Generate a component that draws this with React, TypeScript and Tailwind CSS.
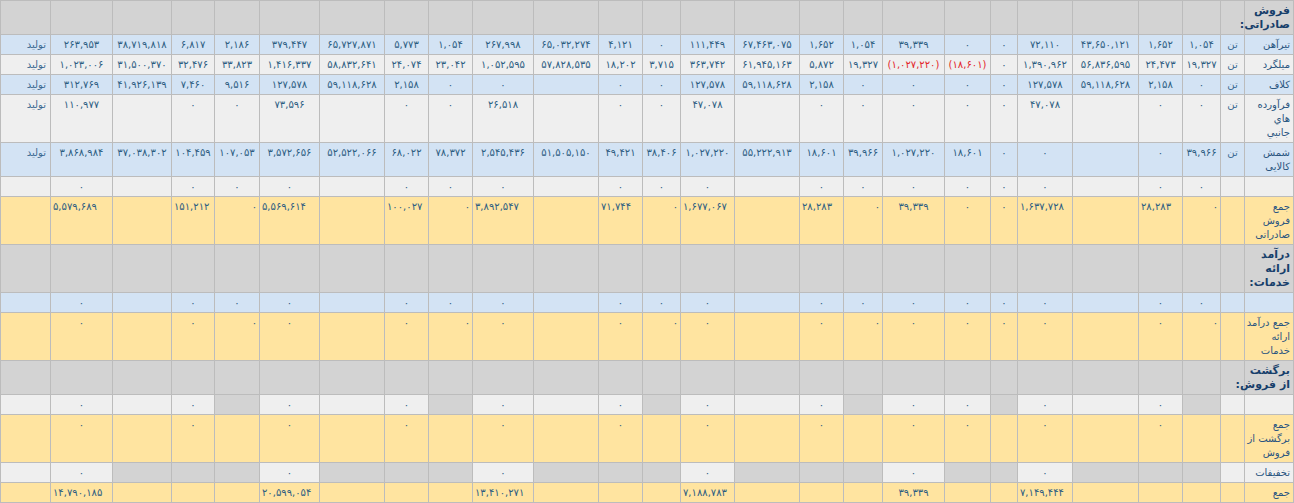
import React from "react";

const fa = (s: string) => s.replace(/[0-9]/g, (d) => "۰۱۲۳۴۵۶۷۸۹"[+d]);

type Kind = "head" | "blue" | "light" | "yellow";

const BG: Record<Kind, string> = {
  head: "bg-[#d3d3d3]",
  blue: "bg-[#d3e3f4]",
  light: "bg-[#efefef]",
  yellow: "bg-[#ffe4a0]",
};

// column widths, right to left
const WIDTHS = [49, 24, 38, 44, 66, 55, 27, 46, 62, 39, 44, 65, 54, 38, 44, 65, 61, 44, 44, 65, 60, 45, 43, 59, 62, 50];

const E = Array(25).fill("") as string[];

// cells are given right to left, unit column first. "<" left, ">" right, "#" grey cell
const ROWS: { kind: Kind; label: string; cells: string[] }[] = [
  { kind: "head", label: "فروش\nصادراتی:", cells: E },
  {
    kind: "blue",
    label: "تیرآهن",
    cells: ["تن", "1,054", "1,652", "43,650,121", "72,110", "0", "0", "39,339", "1,054", "1,652", "67,463,075", "111,449", "0", "4,121", "65,032,274", "267,998", "1,054", "5,773", "65,727,871", "379,447", "2,186", "6,817", "38,719,818", "263,953", "تولید"],
  },
  {
    kind: "light",
    label: "میلگرد",
    cells: ["تن", "19,327", "24,473", "56,836,595", "1,390,962", "0", "(18,601)", "(1,027,220)", "19,327", "5,872", "61,945,163", "363,742", "3,715", "18,202", "57,828,535", "1,052,595", "23,042", "24,074", "58,832,641", "1,416,337", "33,823", "32,476", "31,500,370", "1,023,006", "تولید"],
  },
  {
    kind: "blue",
    label: "کلاف",
    cells: ["تن", "0", "2,158", "59,118,628", "127,578", "0", "0", "0", "0", "2,158", "59,118,628", "127,578", "0", "0", "", "0", "0", "2,158", "59,118,628", "127,578", "9,516", "7,460", "41,926,139", "312,769", "تولید"],
  },
  {
    kind: "light",
    label: "فرآورده\nهاي\nجانبي",
    cells: ["تن", "0", "0", "", "47,078", "0", "0", "0", "0", "0", "", "47,078", "0", "0", "", "26,518", "0", "0", "", "73,596", "0", "0", "", "110,977", "تولید"],
  },
  {
    kind: "blue",
    label: "شمش\nکالایی",
    cells: ["تن", "39,966", "0", "", "0", "0", "18,601", "1,027,220", "39,966", "18,601", "55,222,913", "1,027,220", "38,406", "49,421", "51,505,150", "2,545,436", "78,372", "68,022", "52,522,066", "3,572,656", "107,053", "104,459", "37,038,302", "3,868,984", "تولید"],
  },
  {
    kind: "light",
    label: "",
    cells: ["", "0", "0", "", "0", "0", "0", "0", "0", "0", "", "0", "0", "0", "", "0", "0", "0", "", "0", "0", "0", "", "0", ""],
  },
  {
    kind: "yellow",
    label: "جمع\nفروش\nصادراتی",
    cells: ["", ">0", "<28,283", "", "<1,637,728", "0", "0", "39,339", ">0", "<28,283", "", "<1,677,067", ">0", "<71,744", "", "<3,892,547", ">0", "<100,027", "", "<5,569,614", ">0", "<151,212", "", "<5,579,689", ""],
  },
  { kind: "head", label: "درآمد\nارائه\nخدمات:", cells: E },
  {
    kind: "blue",
    label: "",
    cells: ["", "0", "0", "", "0", "0", "0", "0", "0", "0", "", "0", "0", "0", "", "0", "0", "0", "", "0", "0", "0", "", "0", ""],
  },
  {
    kind: "yellow",
    label: "جمع درآمد\nارائه\nخدمات",
    cells: ["", ">0", "0", "", "0", "0", "0", "0", ">0", "0", "", "0", ">0", "0", "", "0", ">0", "0", "", "0", ">0", "0", "", "0", ""],
  },
  { kind: "head", label: "برگشت\nاز فروش:", cells: E },
  {
    kind: "light",
    label: "",
    cells: ["", "#", "0", "", "0", "#", "0", "0", "#", "0", "", "0", "#", "0", "", "0", "#", "0", "", "0", "#", "0", "", "0", ""],
  },
  {
    kind: "yellow",
    label: "جمع\nبرگشت از\nفروش",
    cells: ["", "", "0", "", "0", "", "0", "0", "", "0", "", "0", "", "0", "", "0", "", "0", "", "0", "", "0", "", "0", ""],
  },
  {
    kind: "light",
    label: "تخفیفات",
    cells: ["", "#", "#", "#", "0", "#", "#", "0", "#", "#", "#", "0", "#", "#", "#", "0", "#", "#", "#", "0", "#", "#", "#", "0", ""],
  },
  {
    kind: "yellow",
    label: "جمع",
    cells: ["", "", "", "", "<7,149,444", "", "", "39,339", "", "", "", "<7,188,783", "", "", "", "<13,410,271", "", "", "", "<20,599,054", "", "", "", "<14,790,185", ""],
  },
];

const td = "border border-[#bcbcbc] px-[2px] pt-[3px] pb-[2px] align-top leading-[14px] whitespace-nowrap";

function ValueCell({ raw, idx }: { raw: string; idx: number }) {
  if (raw === "#") return <td className={`${td} bg-[#d3d3d3]`} />;
  let align = "text-center";
  let v = raw;
  if (v.startsWith("<")) {
    align = "text-left";
    v = v.slice(1);
  } else if (v.startsWith(">")) {
    align = "text-right";
    v = v.slice(1);
  }
  // unit column and the last "تولید" column
  if (idx === 0) return <td className={`${td} text-center text-[10px] text-[#3b6a92]`}>{v}</td>;
  if (idx === 24) return <td className={`${td} text-right pr-[4px] text-[10px] text-[#3b6a92]`}>{v}</td>;
  const red = v.startsWith("(");
  return (
    <td className={`${td} ${align} ${red ? "text-[#e3262b]" : "text-[#2d5d82]"}`}>
      <span dir="ltr">{fa(v)}</span>
    </td>
  );
}

export default function App() {
  return (
    <div className="bg-white font-['DejaVu_Sans',sans-serif] text-[10px]">
      <table dir="rtl" className="w-[1293px] table-fixed border-collapse">
        <colgroup>
          {WIDTHS.map((w, i) => (
            <col key={i} style={{ width: w }} />
          ))}
        </colgroup>
        <tbody>
          {ROWS.map((row, r) => (
            <tr key={r} className={BG[row.kind]}>
              <td
                className={`${td} text-right pr-[3px] ${
                  row.kind === "head" ? "font-bold text-[11px] text-[#173f6b]" : "text-[10px] text-[#2a5580]"
                }`}
              >
                {row.label.split("\n").map((l, i) => (
                  <div key={i}>{l}</div>
                ))}
              </td>
              {row.cells.map((c, i) => (
                <ValueCell key={i} raw={c} idx={i} />
              ))}
            </tr>
          ))}
        </tbody>
      </table>
    </div>
  );
}
